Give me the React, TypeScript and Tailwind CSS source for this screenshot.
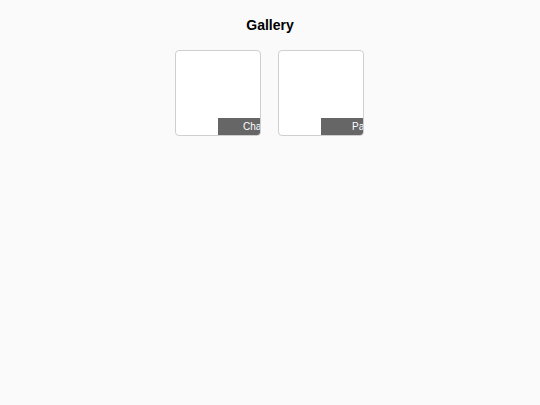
import React from "react";

const items = [
  { label: "Characters", pad: "pl-[25px]" },
  { label: "Paintings", pad: "pl-[31px]" },
];

export default function App() {
  return (
    <div className="min-h-[405px] w-full bg-[#fafafa] pt-[17px] font-['Liberation_Sans',Arial,sans-serif]">
      <h1 className="text-center text-[14px] font-bold leading-[17px] text-black">Gallery</h1>
      <div className="mt-[16px] flex justify-center gap-[17px] pr-[1px]">
        {items.map((it) => (
          <div
            key={it.label}
            className="relative h-[86px] w-[86px] overflow-hidden rounded-[4px] border border-[#cfcfcf] bg-white"
          >
            <div
              className={`absolute bottom-0 left-[42px] flex h-[17px] w-[84px] items-center whitespace-nowrap bg-[#666666] text-[10px] text-white ${it.pad}`}
            >
              {it.label}
            </div>
          </div>
        ))}
      </div>
    </div>
  );
}
